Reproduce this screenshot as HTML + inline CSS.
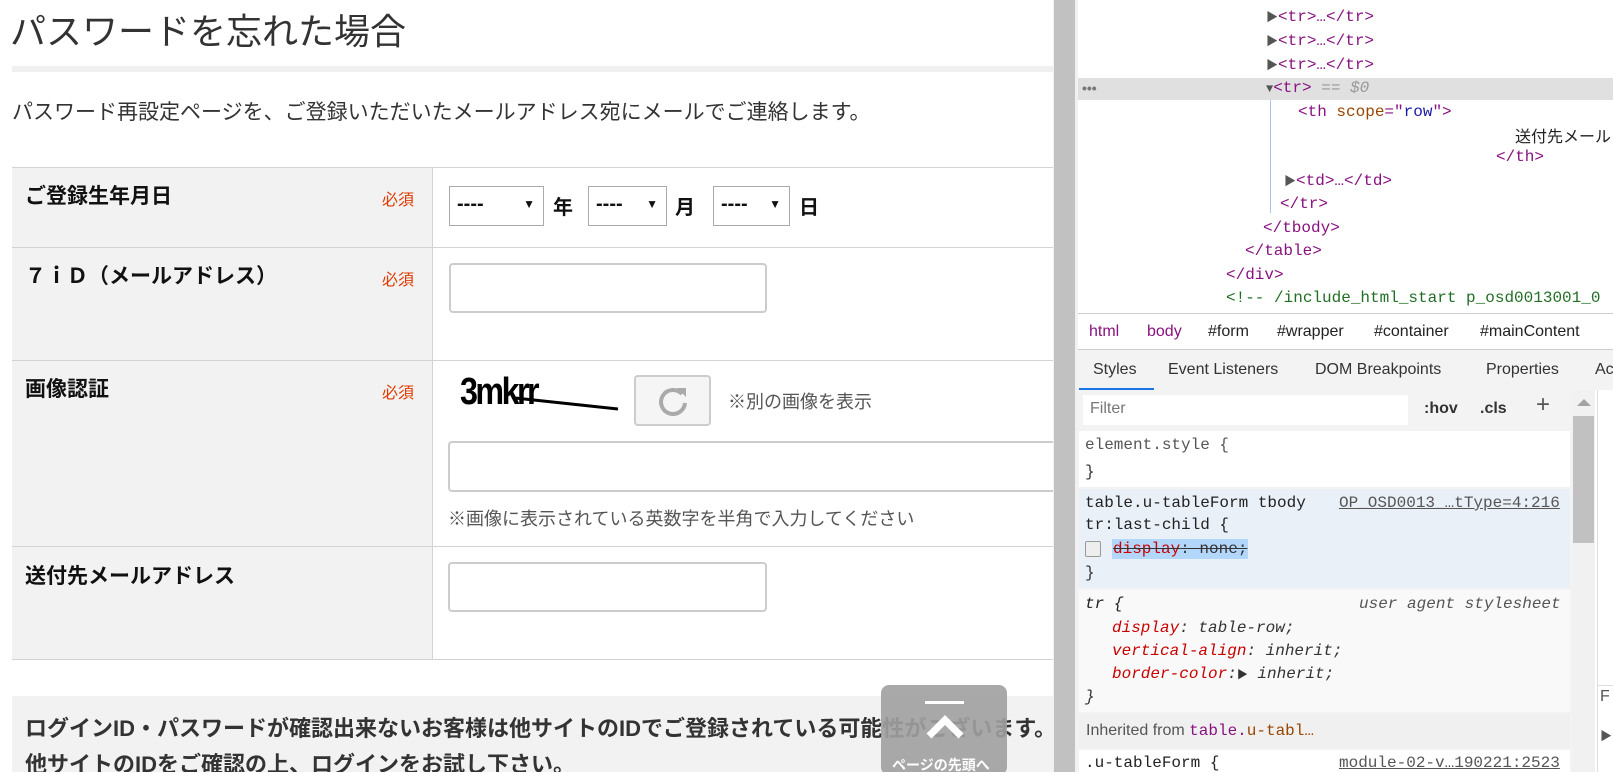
<!DOCTYPE html>
<html><head><meta charset="utf-8"><style>
*{margin:0;padding:0;box-sizing:border-box}
body{width:1613px;height:772px;overflow:hidden;background:#fff;position:relative;font-family:"Liberation Sans","Noto Sans CJK JP",sans-serif;color:#333}
.a{position:absolute;white-space:nowrap}
.m{font-family:"Liberation Mono","Noto Sans CJK JP",monospace;font-size:16px;line-height:20px}
.th{background:#f2f2f2}
.hl{position:absolute;height:1px;background:#d3d3d3}
.inp{position:absolute;border:2px solid #ccc;border-radius:4px;background:#fff}
.sel{position:absolute;border:1px solid #aaa;background:#fff;font-size:20px;font-weight:bold;padding:5px 0 0 7px;color:#111;line-height:24px}
.sel:after{content:"▼";position:absolute;right:8px;top:10px;font-size:12px;line-height:14px}
.req{position:absolute;color:#e03a00;font-size:16px}
.lab{position:absolute;font-weight:bold;font-size:21px;color:#111;line-height:26px}
.tag{color:#881280}.at{color:#994500}.av{color:#1a1aa6}.gr{color:#999}
</style></head><body>
<div style="position:absolute;left:0;top:0;width:1053px;height:772px;overflow:hidden">
<div class="a" style="left:10px;top:10px;font-size:36px;color:#333;line-height:44px">パスワードを忘れた場合</div>
<div class="a" style="left:12px;top:66px;width:1041px;height:6px;background:#f0f0f0"></div>
<div class="a" style="left:12px;top:99px;font-size:21px;color:#333;line-height:28px">パスワード再設定ページを、ご登録いただいたメールアドレス宛にメールでご連絡します。</div>
<div class="a th" style="left:12px;top:167px;width:420px;height:492px"></div>
<div class="hl" style="left:12px;top:167px;width:1041px"></div>
<div class="hl" style="left:12px;top:247px;width:1041px"></div>
<div class="hl" style="left:12px;top:360px;width:1041px"></div>
<div class="hl" style="left:12px;top:546px;width:1041px"></div>
<div class="hl" style="left:12px;top:659px;width:1041px"></div>
<div class="a" style="left:432px;top:167px;width:1px;height:492px;background:#d3d3d3"></div>
<div class="lab" style="left:25px;top:184px">ご登録生年月日</div>
<div class="req" style="left:382px;top:186px">必須</div>
<div class="sel" style="left:449px;top:186px;width:95px;height:40px">----</div>
<div class="lab" style="left:553px;top:195px;font-size:20px">年</div>
<div class="sel" style="left:588px;top:186px;width:79px;height:40px">----</div>
<div class="lab" style="left:675px;top:195px;font-size:20px">月</div>
<div class="sel" style="left:713px;top:186px;width:77px;height:40px">----</div>
<div class="lab" style="left:799px;top:195px;font-size:20px">日</div>
<div class="lab" style="left:25px;top:264px">７ｉＤ（メールアドレス）</div>
<div class="req" style="left:382px;top:266px">必須</div>
<div class="inp" style="left:449px;top:263px;width:318px;height:50px"></div>
<div class="lab" style="left:25px;top:377px">画像認証</div>
<div class="req" style="left:382px;top:379px">必須</div>
<svg class="a" style="left:460px;top:372px" width="165" height="45" viewBox="0 0 165 45"><text x="0" y="32" font-family="Liberation Sans Narrow,Liberation Sans" font-weight="bold" font-size="38" fill="#000" letter-spacing="-3" transform="scale(0.85,1)">3mkrr</text><line x1="55" y1="26" x2="158" y2="37" stroke="#000" stroke-width="3"/></svg>
<div class="a" style="left:634px;top:375px;width:77px;height:51px;border:2px solid #ccc;border-radius:4px;background:#f5f5f5"></div>
<svg class="a" style="left:655px;top:383px" width="36" height="36" viewBox="0 0 36 36"><path d="M27 11 A12 12 0 1 0 30 20" fill="none" stroke="#aaa" stroke-width="4"/><path d="M22 5 L31 5 L31 14 Z" fill="#aaa"/></svg>
<div class="a" style="left:728px;top:388px;font-size:18px;color:#555">※別の画像を表示</div>
<div class="inp" style="left:448px;top:441px;width:640px;height:51px"></div>
<div class="a" style="left:448px;top:505px;font-size:18px;color:#555">※画像に表示されている英数字を半角で入力してください</div>
<div class="lab" style="left:25px;top:564px">送付先メールアドレス</div>
<div class="inp" style="left:448px;top:562px;width:319px;height:50px"></div>
<div class="a" style="left:12px;top:696px;width:1041px;height:80px;background:#f2f2f2"></div>
<div class="a" style="left:25px;top:715px;font-size:22px;font-weight:bold;color:#333;line-height:28px">ログインID・パスワードが確認出来ないお客様は他サイトのIDでご登録されている可能性がございます。</div>
<div class="a" style="left:25px;top:751px;font-size:22px;font-weight:bold;color:#333;line-height:28px">他サイトのIDをご確認の上、ログインをお試し下さい。</div>
<div class="a" style="left:881px;top:685px;width:126px;height:90px;background:rgba(160,160,160,.9);border-radius:8px"></div>
<div class="a" style="left:925px;top:701px;width:39px;height:3px;background:#fff"></div>
<svg class="a" style="left:925px;top:712px" width="40" height="28"><path d="M4 24 L20 8 L36 24" fill="none" stroke="#fff" stroke-width="7"/></svg>
<div class="a" style="left:892px;top:755px;font-size:14px;font-weight:bold;color:#fff">ページの先頭へ</div>
</div>
<div class="a" style="left:1053px;top:0;width:25px;height:772px;background:#f1f1f1"></div>
<div class="a" style="left:1054px;top:0;width:21px;height:772px;background:#c1c1c1"></div>
<div class="a" style="left:1078px;top:0;width:535px;height:772px;background:#fff"></div>
<div class="a" style="left:1078px;top:78px;width:535px;height:22px;background:#e0e0e0"></div>
<div class="a" style="left:1082px;top:80px;color:#777;font-size:14px;font-weight:bold">•••</div>
<div class="a" style="left:1270px;top:100px;width:1px;height:113px;background:#a8c4ee"></div>
<div class="a m" style="left:1266px;top:7px"><span style="color:#555;font-size:12px">▶</span><span class="tag">&lt;tr&gt;…&lt;/tr&gt;</span></div>
<div class="a m" style="left:1266px;top:31px"><span style="color:#555;font-size:12px">▶</span><span class="tag">&lt;tr&gt;…&lt;/tr&gt;</span></div>
<div class="a m" style="left:1266px;top:55px"><span style="color:#555;font-size:12px">▶</span><span class="tag">&lt;tr&gt;…&lt;/tr&gt;</span></div>
<div class="a m" style="left:1266px;top:78px"><span style="color:#555;font-size:12px">▼</span><span class="tag">&lt;tr&gt;</span> <span class="gr">== <i>$0</i></span></div>
<div class="a m" style="left:1298px;top:102px"><span class="tag">&lt;th </span><span class="at">scope</span><span class="tag">="</span><span class="av">row</span><span class="tag">"&gt;</span></div>
<div class="a" style="left:1515px;top:123px;font-size:16px;color:#222">送付先メール</div>
<div class="a m tag" style="left:1496px;top:147px">&lt;/th&gt;</div>
<div class="a m" style="left:1284px;top:171px"><span style="color:#555;font-size:12px">▶</span><span class="tag">&lt;td&gt;…&lt;/td&gt;</span></div>
<div class="a m tag" style="left:1280px;top:194px">&lt;/tr&gt;</div>
<div class="a m tag" style="left:1263px;top:218px">&lt;/tbody&gt;</div>
<div class="a m tag" style="left:1245px;top:241px">&lt;/table&gt;</div>
<div class="a m tag" style="left:1226px;top:265px">&lt;/div&gt;</div>
<div class="a m" style="left:1226px;top:288px;color:#236e25">&lt;!-- /include_html_start p_osd0013001_0</div>
<div class="a" style="left:1078px;top:313px;width:535px;height:1px;background:#ccc"></div>
<div class="a" style="left:1078px;top:314px;width:535px;height:35px;background:#fff"></div>
<div class="a" style="top:323px;left:1089px;font-size:16px;color:#881280">html</div>
<div class="a" style="top:323px;left:1147px;font-size:16px;color:#881280">body</div>
<div class="a" style="top:323px;left:1208px;font-size:16px;color:#222">#form</div>
<div class="a" style="top:323px;left:1277px;font-size:16px;color:#222">#wrapper</div>
<div class="a" style="top:323px;left:1374px;font-size:16px;color:#222">#container</div>
<div class="a" style="top:323px;left:1480px;font-size:16px;color:#222">#mainContent</div>
<div class="a" style="left:1078px;top:349px;width:535px;height:1px;background:#ccc"></div>
<div class="a" style="left:1078px;top:350px;width:535px;height:40px;background:#f3f3f3"></div>
<div class="a" style="top:361px;left:1093px;font-size:16px;color:#333">Styles</div>
<div class="a" style="top:361px;left:1168px;font-size:16px;color:#333">Event Listeners</div>
<div class="a" style="top:361px;left:1315px;font-size:16px;color:#333">DOM Breakpoints</div>
<div class="a" style="top:361px;left:1486px;font-size:16px;color:#333">Properties</div>
<div class="a" style="top:361px;left:1595px;font-size:16px;color:#333">Ac</div>
<div class="a" style="left:1079px;top:388px;width:75px;height:2px;background:#1a73e8"></div>
<div class="a" style="left:1078px;top:390px;width:494px;height:382px;background:#f3f3f3"></div>
<div class="a" style="left:1083px;top:395px;width:325px;height:30px;background:#fff"></div>
<div class="a" style="left:1090px;top:400px;font-size:16px;color:#777">Filter</div>
<div class="a" style="left:1424px;top:400px;font-size:16px;font-weight:bold;color:#333">:hov</div>
<div class="a" style="left:1480px;top:400px;font-size:16px;font-weight:bold;color:#333">.cls</div>
<div class="a" style="left:1536px;top:391px;font-size:24px;color:#555">+</div>
<div class="a" style="left:1079px;top:431px;width:491px;height:56px;background:#fff"></div>
<div class="a m" style="left:1085px;top:435px;color:#555">element.style {</div>
<div class="a m" style="left:1085px;top:462px;color:#333">}</div>
<div class="a" style="left:1079px;top:489px;width:491px;height:99px;background:#eaf0f8"></div>
<div class="a m" style="left:1085px;top:493px;color:#222">table.u-tableForm tbody</div>
<div class="a m" style="left:1339px;top:493px;color:#555;text-decoration:underline">OP_OSD0013_…tType=4:216</div>
<div class="a m" style="left:1085px;top:515px;color:#222">tr:last-child {</div>
<div class="a" style="left:1085px;top:541px;width:16px;height:16px;border:1px solid #999;border-radius:2px;background:#eee"></div>
<div class="a m" style="left:1112px;top:539px;background:#b3d7fb;text-decoration:line-through;padding:0 1px"><span style="color:#c80000">display</span>: none;</div>
<div class="a m" style="left:1085px;top:563px;color:#333">}</div>
<div class="a" style="left:1079px;top:590px;width:491px;height:122px;background:#f9f9f9"></div>
<div class="a m" style="left:1085px;top:594px;color:#222;font-style:italic">tr {</div>
<div class="a m" style="left:1359px;top:594px;color:#555;font-style:italic">user agent stylesheet</div>
<div class="a m" style="left:1112px;top:618px;font-style:italic"><span style="color:#c80000">display</span>: table-row;</div>
<div class="a m" style="left:1112px;top:641px;font-style:italic"><span style="color:#c80000">vertical-align</span>: inherit;</div>
<div class="a m" style="left:1112px;top:664px;font-style:italic"><span style="color:#c80000">border-color</span>:<span style="font-size:11px;font-style:normal">▶</span> inherit;</div>
<div class="a m" style="left:1085px;top:687px;color:#333;font-style:italic">}</div>
<div class="a" style="left:1079px;top:714px;width:491px;height:34px;background:#f0f0f0"></div>
<div class="a" style="left:1086px;top:721px;font-size:16px;color:#555">Inherited from <span class="m" style="color:#881280">table.<span style="color:#994500">u-tabl…</span></span></div>
<div class="a" style="left:1079px;top:750px;width:491px;height:22px;background:#fff"></div>
<div class="a m" style="left:1085px;top:753px;color:#222">.u-tableForm {</div>
<div class="a m" style="left:1339px;top:753px;color:#555;text-decoration:underline">module-02-v…190221:2523</div>
<div class="a" style="left:1572px;top:390px;width:23px;height:382px;background:#f1f1f1"></div>
<div class="a" style="left:1573px;top:416px;width:21px;height:127px;background:#c1c1c1"></div>
<div class="a" style="left:1577px;top:399px;width:0;height:0;border-left:7px solid transparent;border-right:7px solid transparent;border-bottom:7px solid #a3a3a3"></div>
<div class="a" style="left:1597px;top:390px;width:1px;height:382px;background:#ddd"></div>
<div class="a" style="left:1598px;top:390px;width:15px;height:382px;background:#fff"></div>
<div class="a" style="left:1598px;top:685px;width:15px;height:1px;background:#ddd"></div>
<div class="a" style="left:1600px;top:688px;font-size:16px;color:#555">F</div>
<div class="a" style="left:1600px;top:727px;font-size:12px;color:#555">▶</div>
</body></html>
